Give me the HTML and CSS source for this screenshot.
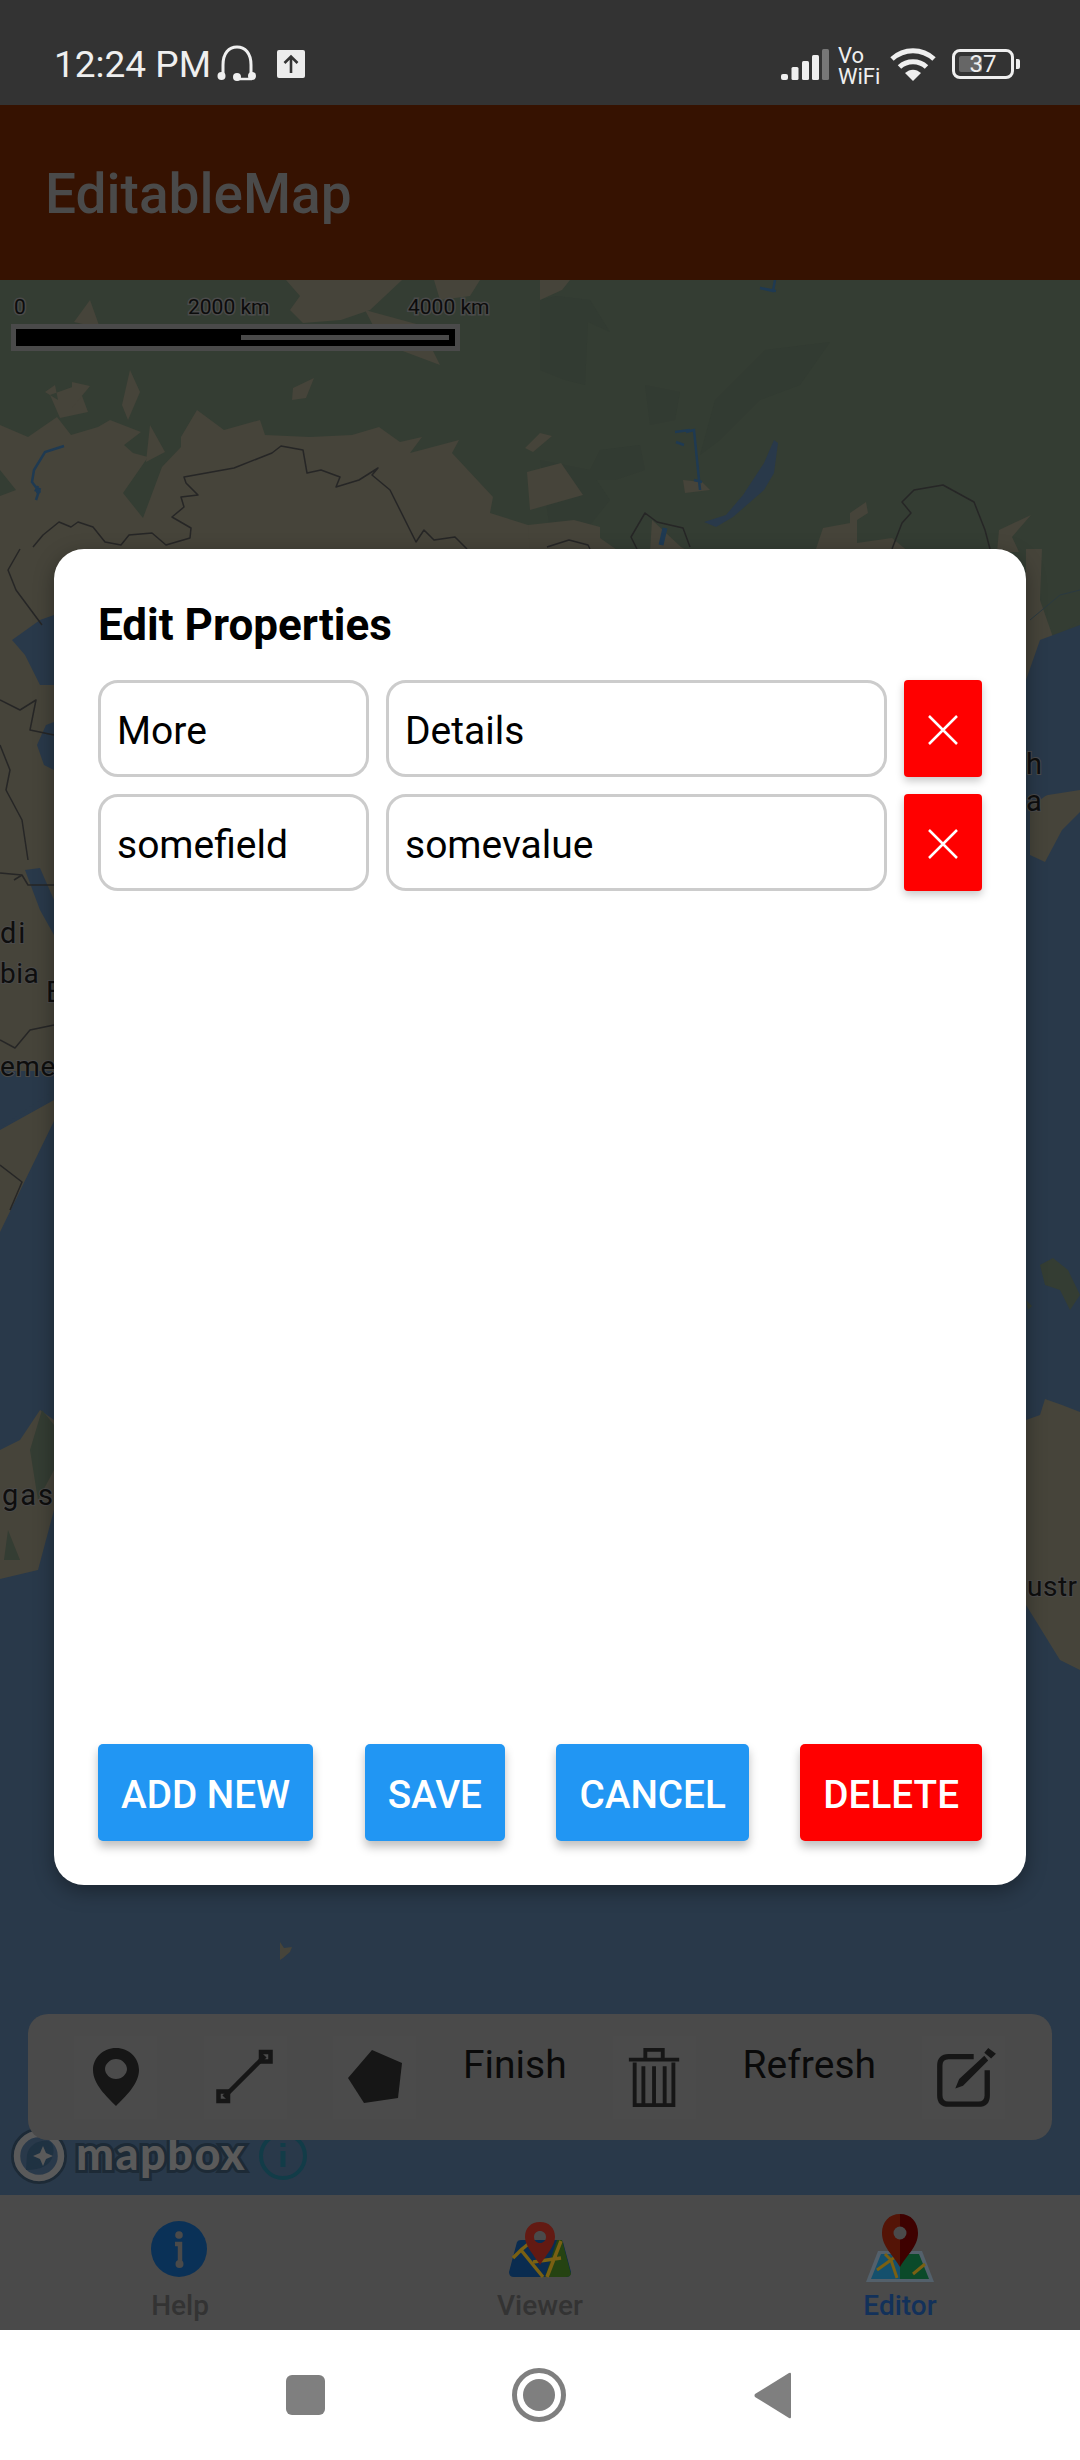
FILE: index.html
```html
<!DOCTYPE html>
<html lang="en">
<head>
<meta charset="utf-8">
<title>EditableMap</title>
<link rel="stylesheet" href="styles.css">
</head>
<body>
<div class="screen">
  <header class="status">
    <div class="status-left">
      <span class="clock">12:24 PM</span>
      <svg class="headset" viewBox="0 0 40 38"><path d="M6 30V20C6 8 12 2 20 2s14 6 14 18v10" fill="none" stroke="#efefef" stroke-width="3"/><circle cx="4.500" cy="31" r="4" fill="#efefef"/><circle cx="35" cy="31" r="4" fill="#efefef"/><circle cx="20" cy="32" r="4" fill="#efefef"/><path d="M20 34h15" stroke="#efefef" stroke-width="2.500"/></svg>
      <svg class="upload" viewBox="0 0 28 28"><rect width="28" height="28" rx="2" fill="#ececec"/><path d="M14 23V7M7.500 13 14 6.500l6.500 6.500" fill="none" stroke="#333" stroke-width="2.600"/></svg>
    </div>
    <div class="status-right">
      <svg class="signal" viewBox="0 0 48 31"><rect x="0" y="25" width="7" height="6" rx="2" fill="#efefef"/><rect x="10.500" y="18" width="7" height="13" rx="1.500" fill="#efefef"/><rect x="21" y="12" width="7" height="19" rx="1.500" fill="#efefef"/><rect x="31" y="6" width="7" height="25" rx="1.500" fill="#efefef"/><rect x="41" y="0" width="7" height="31" rx="1.500" fill="#777"/></svg>
      <div class="vowifi"><span>Vo</span><span>WiFi</span></div>
      <svg class="wifi" viewBox="0 0 46 34"><g fill="none" stroke="#efefef" stroke-width="5"><path d="M2 12C14 1 32 1 44 12"/><path d="M9.500 20C17 13 29 13 36.500 20"/></g><path d="M15 26c5-4.500 11-4.500 16 0l-8 8z" fill="#efefef"/></svg>
      <div class="battery"><div class="battery-body"><span class="battery-level"></span><span class="battery-text">37</span></div><span class="battery-nub"></span></div>
    </div>
  </header>

  <div class="app">
    <div class="appbar"><h1 class="app-title">EditableMap</h1></div>

    <main class="map">
      <svg class="map-art" viewBox="0 280 1080 1915" preserveAspectRatio="none">
        <rect x="0" y="280" width="1080" height="1915" class="water"/>
        <rect x="0" y="280" width="1080" height="260" class="forest"/>
        <path class="forest" d="M0 540H1080V600L1046 640 1026 690H0Z"/>
        <path class="forest-dark" d="M556 296 590 300 610 332 588 322 585 385 565 380 540 370 540 300ZM645 385 680 392 675 420 650 425ZM765 350 830 342 800 385 760 400 720 440 700 455 715 400ZM600 450 640 445 645 470 615 480 585 480ZM540 460 590 470 610 500 590 525 550 530Z"/>
        <path class="land" d="M0 425 28 437 57 417 71 435 98 427 110 420 141 432 124 445 133 453 148 457 123 493 143 518 162 467 181 447 181 437 197 410 224 430 260 420 265 435 310 437 352 435 379 427 400 442 422 437 410 453 459 440 452 453 493 497 490 513 528 525 545 552 528 700 54 1000 54 1121 0 1232V1130L54 1100V1071H0Z"/>
        <path class="land" d="M525 448 540 433 552 436 533 452ZM527 472 561 463 583 495 530 510ZM528 525 574 520 600 527 600 538 620 552 530 552ZM650 552 652 520 681 547 690 552ZM823 528 850 523 850 513 866 502 868 513 857 520 857 543 892 538 909 552 815 552ZM999 530 1031 515 1012 537 1019 552 997 552ZM683 480 702 482 710 490 685 493Z"/>
        <path class="forest" d="M560 560H1080V640L1040 660 1026 700H560Z"/>
        <path class="land" d="M286 280H402L385 296 370 310 341 320 303 323 290 310 300 296ZM365 310 420 325 440 365 400 350 378 335ZM434 280H480L470 296 440 300ZM293 388 314 378 306 398 292 400ZM74 322 90 300 100 328ZM78 385 88 412 60 418 50 395ZM130 370 140 392 128 420 122 405ZM150 425 165 452 146 462ZM55 385 45 392 58 400ZM562 290 540 300V280H570Z"/>
        <path class="land" d="M72 382 90 386 72 408Z"/>
        <path class="land" d="M0 600H54V690H0ZM1026 549H1080V600L1052 640 1026 690Z"/>
        <path class="forest" d="M0 470 16 490 0 496ZM1042 549 1080 549 1080 620 1054 640 1040 600Z"/>
        <path class="land" d="M1030 800 1048 795 1080 790V812L1062 830 1045 862 1030 855Z"/>
        <path class="land" d="M0 1450 20 1440 40 1410 54 1420V1510L38 1570 0 1579Z"/>
        <path class="forest" d="M42 1410 54 1425V1470L38 1500 30 1450ZM8 1530 20 1560 4 1560Z"/>
        <path class="land" d="M1026 1420 1040 1415 1045 1399 1062 1405 1080 1412V1670L1060 1660 1026 1605Z"/>
        <path class="forest" d="M1040 1265 1053 1258 1068 1270 1080 1295 1070 1310 1060 1290 1045 1285ZM1026 1300 1032 1306 1028 1310Z"/>
        <path class="land" d="M280 1942 284 1948 292 1947 290 1952 283 1958 280 1960Z"/>
        <path class="water" d="M12 640 40 620 54 615V685L40 685 25 655ZM37 745 46 725 54 722V770L44 765ZM25 870 40 868 54 900V935L40 910ZM0 1071H54V1090L0 1128Z"/>
        <path class="water" d="M1040 640 1080 625V770L1040 800 1026 800V680Z"/>
        <path class="water" d="M774 440 778 443 774 473 764 490 733 517 716 527 704 522 726 515 743 495 764 463Z"/>
        <path class="river" d="M64 446 45 452 34 470 32 482 38 490 36 490 38 486M36 500 40 488M40 490 36 492"/>
        <path class="river" d="M686 432 694 430 697 460 700 490M675 432 690 430M676 442 684 445M694 480 702 482"/>
        <path class="river" d="M775 280 773 291 760 288 776 291"/>
        <path class="river-thick" d="M665 528 661 545M40 490 36 492"/>
        <path class="border" d="M33 547 43 535 59 522 71 527 78 522 93 527 105 542 121 545 129 535 152 533 166 545 190 538 191 528 172 517 184 507 181 497 198 495 186 483 184 477 234 468 272 453 281 446 303 450 307 473 321 470 340 477 336 487 359 480 378 468 372 475 390 490 416 542 424 530 434 540 455 537 467 549"/>
        <path class="border" d="M637 549 631 537 645 513 657 522 683 528 690 547M892 549 902 523 911 513 902 502 914 490 943 485 974 502 985 530 990 549M547 547 569 540 588 545 590 549"/>
        <path class="border" d="M20 549 8 570 16 590 42 625 M0 700 20 710 36 700 30 730 54 735M0 745 10 770 6 790 22 820 28 860 M0 873 22 875 28 885 54 885M22 875 14 880 M0 1040 15 1048 30 1030 54 1025M0 1165 22 1182 10 1210"/>
        <path class="border-thin" d="M1030 620 1060 595 1080 590"/>
        <text class="place" x="0" y="943">di</text>
        <text class="place place-tight" x="0" y="983">bia</text>
        <text class="place" x="46" y="1002">B</text>
        <text class="place place-tight" x="0" y="1076">eme</text>
        <text class="place" x="1026" y="774">h</text>
        <text class="place" x="1026" y="811">a</text>
        <text class="place" x="2" y="1505">gas</text>
        <text class="place place-tight" x="1027" y="1596">ustr</text>
      </svg>

      <div class="scale">
        <div class="scale-labels"><span>0</span><span>2000 km</span><span>4000 km</span></div>
        <div class="scale-bar"><span class="scale-inner"></span></div>
      </div>

      <div class="attribution">
        <svg class="mapbox-mark" viewBox="0 0 56 56"><circle cx="28" cy="28" r="26.500" fill="none" stroke="#1d2a36" stroke-width="3"/><circle cx="28" cy="28" r="22" fill="none" stroke="#5a5a5a" stroke-width="6.500"/><path d="M15 42 16 27C18 17 27 12 37 13 43 14 43 22 42 27 40 37 30 42 15 42Z" fill="#1f3242"/><path d="M32 18l3 7 7 3-7 3-3 7-3-7-7-3 7-3z" fill="#5a5a5a"/></svg>
        <span class="mapbox-word">mapbox</span>
        <svg class="mapbox-info" viewBox="0 0 48 48"><circle cx="24" cy="24" r="22" fill="none" stroke="#123c48" stroke-width="4"/><path d="M24 19v16M24 11v4" stroke="#123c48" stroke-width="5"/></svg>
      </div>

      <nav class="toolbar">
        <button class="tool"><svg viewBox="-1 0 50 60" class="tool-icon"><path fill-rule="evenodd" fill="#161616" d="M24 1C11 1 1 11 1 23c0 14 14 27 23 36 9-9 23-22 23-36C47 11 37 1 24 1Zm0 11c6 0 11 5 11 10s-5 10-11 10-11-5-11-10 5-10 11-10Z"/></svg></button>
        <button class="tool"><svg viewBox="0 0 60 60" class="tool-icon"><path d="M9 50 50 9" stroke="#161616" stroke-width="4.500"/><path fill="none" stroke="#161616" stroke-width="4.500" d="M3.500 44.500h9.500v9.500H3.500zM46 5h9.500v9.500H46z"/></svg></button>
        <button class="tool"><svg viewBox="-4 -3 62 60" class="tool-icon"><path fill="#161616" d="M24 0 54 13 50 48 16 53 0 28Z"/></svg></button>
        <span class="tool-text">Finish</span>
        <button class="tool"><svg viewBox="1 0 52 62" class="tool-icon"><path fill="none" stroke="#161616" stroke-width="4" d="M0 13h52M17 12V3h18v9M6 16v44h40V16M15 20v38M26 20v38M37 20v38"/></svg></button>
        <span class="tool-text">Refresh</span>
        <button class="tool"><svg viewBox="-3 0 62 62" class="tool-icon"><path fill="none" stroke="#161616" stroke-width="5.500" stroke-linejoin="round" d="M38 10H12C6 10 3 13 3 19v31c0 6 3 9 9 9h31c6 0 9-3 9-9V24"/><path fill="#161616" d="M23 33 49 9l4 5-26 26-8 3ZM53 1l8 6-5 5-7-6Z"/></svg></button>
      </nav>
    </main>

    <footer class="tabs">
      <div class="tab">
        <svg class="tab-icon" viewBox="1 0 70 70"><circle cx="35" cy="35" r="28" fill="#0a3157"/><circle cx="35" cy="21" r="3.800" fill="#4a4a4a"/><path d="M31 30h5v20" fill="none" stroke="#4a4a4a" stroke-width="4.500"/><circle cx="35.500" cy="50" r="4" fill="#4a4a4a"/></svg>
        <span class="tab-label">Help</span>
      </div>
      <div class="tab">
        <svg class="tab-icon" viewBox="0 0 70 70"><path d="M12 28Q13 26 16 26H54Q57 26 58 28L66 58Q66 63 61 63H9Q4 63 4 58Z" fill="#0a2c50"/><path d="M52 26H57L66 60Q65 63 61 63H40Z" fill="#254312"/><path d="M8 44 16 36 38 63M16 36 28 26M56 27 42 63M28 48 56 44" fill="none" stroke="#7a6013" stroke-width="3.500"/><path fill="#631a13" fill-rule="evenodd" d="M35 8C26 8 20 14 20 23c0 9 9 18 15 28 6-10 15-19 15-28 0-9-6-15-15-15Zm0 9c3.500 0 6 2.500 6 6s-2.500 6-6 6-6-2.500-6-6 2.500-6 6-6Z"/></svg>
        <span class="tab-label">Viewer</span>
      </div>
      <div class="tab tab-active">
        <svg class="tab-icon" viewBox="0 0 70 70"><path d="M13 37H57L69 68H1Z" fill="#53606b"/><path d="M35 40H16L6 65H35Z" fill="#14506d"/><path d="M35 40H54L64 65H35Z" fill="#0b4a2a"/><path d="M12 56 26 46 32 64M20 40 26 46 34 40M48 60 60 50" fill="none" stroke="#7a6013" stroke-width="3"/><path fill="#541406" d="M35 0C24 0 17 8 17 19c0 14 12 23 18 34Z"/><path fill="#3e0100" d="M35 0c11 0 18 8 18 19 0 14-12 23-18 34Z"/><circle cx="35" cy="19" r="6.500" fill="#4a4a4a"/></svg>
        <span class="tab-label">Editor</span>
      </div>
    </footer>

    <div class="overlay">
      <section class="modal">
        <h2 class="modal-title">Edit Properties</h2>
        <div class="rows">
          <div class="row">
            <div class="field field-key">More</div>
            <div class="field field-value">Details</div>
            <button class="remove"><svg viewBox="0 0 30 30" class="remove-icon"><path d="M1 1 29 29M29 1 1 29" stroke="#fff" stroke-width="2.500"/></svg></button>
          </div>
          <div class="row">
            <div class="field field-key">somefield</div>
            <div class="field field-value">somevalue</div>
            <button class="remove"><svg viewBox="0 0 30 30" class="remove-icon"><path d="M1 1 29 29M29 1 1 29" stroke="#fff" stroke-width="2.500"/></svg></button>
          </div>
        </div>
        <div class="actions">
          <button class="action">ADD NEW</button>
          <button class="action">SAVE</button>
          <button class="action">CANCEL</button>
          <button class="action action-danger">DELETE</button>
        </div>
      </section>
    </div>
  </div>

  <div class="navbar">
    <span class="nav-square"></span>
    <svg class="nav-home" viewBox="0 0 54 54"><circle cx="27" cy="27" r="24.500" fill="none" stroke="#7f7f7f" stroke-width="5"/><circle cx="27" cy="27" r="16" fill="#7f7f7f"/></svg>
    <svg class="nav-back" viewBox="0 0 37 47"><path d="M37 2Q37 0 35 1L1 22Q0 23.500 1 25L35 46Q37 47 37 45Z" fill="#7f7f7f"/></svg>
  </div>
</div>
</body>
</html>
```

FILE: styles.css
```css
* { box-sizing: border-box; }
html, body { margin: 0; padding: 0; }
body { font-family: Roboto, "Liberation Sans", sans-serif; background: #fff; }
button { font-family: inherit; border: 0; padding: 0; margin: 0; }

.screen { width: 1080px; height: 2460px; display: flex; flex-direction: column; overflow: hidden; }

/* status bar */
.status { height: 105px; flex: none; background: #333; color: #efefef; display: flex; justify-content: space-between; align-items: flex-start; padding: 45px 60px 0 54px; }
.status-left { display: flex; align-items: flex-start; }
.clock { font-size: 37px; line-height: 36px; margin-top: 2px; }
.headset { width: 40px; height: 38px; margin: 0 0 0 6px; }
.upload { width: 28px; height: 28px; margin: 5px 0 0 20px; }
.status-right { display: flex; align-items: flex-start; }
.signal { width: 48px; height: 31px; margin-top: 4px; }
.vowifi { display: flex; flex-direction: column; font-size: 22px; line-height: 21px; margin-left: 9px; width: 43px; }
.wifi { width: 46px; height: 34px; margin: 2px 0 0 9px; }
.battery { display: flex; align-items: center; margin: 4px 0 0 16px; }
.battery-body { position: relative; width: 62px; height: 30px; border: 3px solid #efefef; border-radius: 8px; display: flex; align-items: center; justify-content: center; }
.battery-level { position: absolute; left: 4px; top: 4px; bottom: 4px; width: 23px; background: #666; border-radius: 2px; }
.battery-text { position: relative; font-size: 24px; line-height: 24px; }
.battery-nub { width: 4px; height: 10px; margin-left: 2px; background: #efefef; border-radius: 0 2px 2px 0; }

/* app */
.app { position: relative; flex: none; height: 2225px; display: flex; flex-direction: column; }
.appbar { height: 175px; flex: none; background: #361201; display: flex; align-items: center; padding: 3px 0 0 45px; }
.app-title { margin: 0; font-size: 55px; font-weight: 500; color: #4a4a4a; }

/* map */
.map { position: relative; flex: 1; overflow: hidden; background: #29394a; }
.map-art { position: absolute; left: 0; top: 0; width: 100%; height: 100%; display: block; }
.water { fill: #29394a; }
.forest { fill: #343d33; }
.forest-dark { fill: #323b32; }
.land { fill: #46443a; }
.river { fill: none; stroke: #1f3a52; stroke-width: 2.500; }
.river-thick { fill: none; stroke: #1f3a52; stroke-width: 5; }
.border { fill: none; stroke: #262626; stroke-width: 1.500; stroke-linejoin: round; }
.border-thin { fill: none; stroke: #2b3a40; stroke-width: 1; }
.place { font-family: Roboto, sans-serif; font-size: 29px; letter-spacing: 2px; fill: #0e0e0e; paint-order: stroke; stroke: #4a4a4a; stroke-width: 2px; }
.place-tight { font-size: 28px; letter-spacing: 0.500px; }

.scale { position: absolute; left: 11px; top: 15px; width: 449px; }
.scale-labels { display: grid; grid-template-columns: 174px 220px 90px; padding-left: 3px; font-size: 21px; line-height: 24px; color: #0c0c0c; height: 29px; white-space: nowrap; }
.scale-labels span { -webkit-text-stroke: 3px #4a4a4a; paint-order: stroke fill; }
.scale-bar { position: relative; height: 27px; background: #000; border: 5px solid #4a4a4a; }
.scale-inner { position: absolute; left: 225px; right: 6px; top: 6px; bottom: 6px; background: #4a4a4a; }

.attribution { position: absolute; left: 11px; top: 1848px; display: flex; align-items: center; }
.mapbox-mark { width: 56px; height: 56px; }
.mapbox-word { font-family: Lato, Roboto, sans-serif; font-weight: 900; font-size: 45px; line-height: 50px; letter-spacing: 1.500px; color: #5a5a5a; -webkit-text-stroke: 6px #1d2a36; paint-order: stroke fill; margin: -6px 0 0 9px; }
.mapbox-info { width: 48px; height: 48px; margin-left: 13px; }

.toolbar { position: absolute; left: 28px; right: 28px; bottom: 55px; height: 126px; background: #4a4a4a; border-radius: 20px; display: flex; justify-content: space-evenly; align-items: center; }
.tool { width: 83px; height: 83px; background: #4b4b4b; display: flex; align-items: center; justify-content: center; }
.tool-icon { width: 62px; height: 60px; overflow: visible; }
.tool-text { font-size: 39px; line-height: 46px; color: #0a0a0a; align-self: flex-start; margin-top: 28px; }

/* bottom tabs */
.tabs { height: 135px; flex: none; background: #4a4a4a; display: grid; grid-template-columns: repeat(3, 1fr); }
.tab { position: relative; display: flex; flex-direction: column; align-items: center; padding-top: 19px; }
.tab-icon { width: 70px; height: 70px; overflow: visible; }
.tab-label { font-size: 28px; font-weight: 500; line-height: 32px; color: #333; margin-top: 6px; }
.tab-active .tab-label { color: #12315a; }

/* dialog */
.overlay { position: absolute; inset: 0; display: flex; align-items: center; justify-content: center; padding-bottom: 1px; }
.modal { width: 972px; height: 1336px; background: #fff; border-radius: 30px; padding: 44px; display: flex; flex-direction: column; box-shadow: 0 6px 20px rgba(0,0,0,.35); }
.modal-title { margin: 0; font-size: 44px; line-height: 44px; font-weight: 700; color: #000; height: 87px; padding-top: 10px; }
.rows { display: flex; flex-direction: column; gap: 17px; }
.row { display: flex; gap: 17px; height: 97px; }
.field { border: 3px solid #ccc; border-radius: 20px; font-size: 39px; line-height: 96px; padding-left: 16px; color: #000; }
.field-key { flex: 0 0 271px; }
.field-value { flex: 1; }
.remove { flex: 0 0 78px; background: #f00; border-radius: 4px; display: flex; align-items: center; justify-content: center; padding-top: 3px; box-shadow: 0 4px 8px rgba(0,0,0,.22); }
.remove-icon { width: 30px; height: 30px; }
.actions { margin-top: auto; display: flex; justify-content: space-between; }
.action { height: 97px; padding: 3px 23px 0; background: #2196f3; color: #fff; font-size: 38.700px; font-weight: 500; border-radius: 5px; box-shadow: 0 6px 10px rgba(0,0,0,.25); }
.action-danger { background: #f00; }

/* android nav */
.navbar { flex: 1; background: #fff; position: relative; display: flex; align-items: center; }
.nav-square { width: 39px; height: 40px; margin-left: 286px; background: #7f7f7f; border-radius: 6px; }
.nav-home { width: 54px; height: 54px; margin-left: 187px; }
.nav-back { width: 37px; height: 47px; margin-left: 188px; }
```
